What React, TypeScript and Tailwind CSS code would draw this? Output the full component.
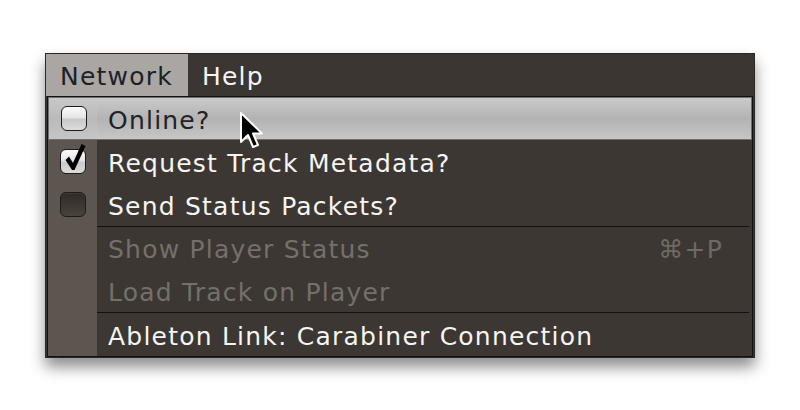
const font = { fontFamily: '"DejaVu Sans", "Liberation Sans", sans-serif' };

const Box = ({ kind }: { kind: "light" | "checked" | "dark" }) => {
  const base =
    "relative w-[26px] h-[25px] rounded-[6px] border border-[#1e1b19]";
  if (kind === "dark")
    return (
      <div
        className={`${base} bg-[linear-gradient(#2f2a26,#4a433d)] shadow-[inset_0_1px_0_rgba(255,255,255,0.08)]`}
      />
    );
  return (
    <div
      className={`${base} bg-[linear-gradient(#fbfbfb,#e6e6e6_45%,#c9c9c9_55%,#dcdcdc)]`}
    >
      {kind === "checked" && (
        <svg
          className="absolute left-[3px] top-[-7px]"
          width="22"
          height="29"
          viewBox="0 0 22 29"
        >
          <path
            d="M1.5 17 L5 13.5 L9 20 L17.5 1 L21.5 3 L10.5 27 L8 27 Z"
            fill="#000"
          />
        </svg>
      )}
    </div>
  );
};

type Row = {
  label: string;
  box?: "light" | "checked" | "dark";
  disabled?: boolean;
  active?: boolean;
  shortcut?: string;
  sepBefore?: boolean;
  short?: boolean;
};

const rows: Row[] = [
  { label: "Online?", box: "light", active: true },
  { label: "Request Track Metadata?", box: "checked" },
  { label: "Send Status Packets?", box: "dark" },
  { label: "Show Player Status", disabled: true, shortcut: "⌘+P", sepBefore: true, short: true },
  { label: "Load Track on Player", disabled: true },
  { label: "Ableton Link: Carabiner Connection", sepBefore: true },
];

const Cursor = () => (
  <svg
    className="absolute left-[239px] top-[111px]"
    width="26"
    height="40"
    viewBox="0 0 26 40"
  >
    <path
      d="M2 2 L2 31 L9 24 L14 36 L19 34 L14 22.5 L23 22.5 Z"
      fill="#000"
      stroke="#fff"
      strokeWidth="2"
      strokeLinejoin="round"
    />
  </svg>
);

export default function App() {
  return (
    <div
      className="relative w-[800px] h-[410px] bg-white pt-[53px] pl-[45px]"
      style={font}
    >
      <div className="w-[710px] bg-[#3b3632] border border-[#2a2724] shadow-[0_9px_14px_rgba(0,0,0,0.45)] text-[25px] tracking-[1.22px]">
        <div className="flex h-[42px]">
          <div className="w-[142px] bg-[#a9a6a4] text-[#1c2126] flex items-center pl-[14px] pt-[4px]">
            Network
          </div>
          <div className="text-[#f5f5f5] flex items-center pl-[14px] pt-[4px]">
            Help
          </div>
        </div>
        <div className="mx-px border border-[#141210] bg-[#3c3732] flex flex-col">
          {rows.map((r) => (
            <div key={r.label} className="flex flex-col">
              {r.sepBefore && (
                <div className="flex">
                  <div className="w-[49px] bg-[#5d5650] h-px" />
                  <div className="flex-1 mr-[3px] h-px bg-[#141110]" />
                </div>
              )}
              <div
                className={`flex ${r.short ? "h-[42px]" : "h-[43px]"} ${
                  r.active
                    ? "border border-[#6f6f6f] bg-[linear-gradient(#cacaca,#b3b3b3_50%,#c6c6c6)]"
                    : ""
                }`}
              >
                <div
                  className={`${
                    r.active ? "w-[48px] bg-[#c6c6c6]/40" : "w-[49px] bg-[#5d5650]"
                  } flex items-center justify-center pl-[1px]`}
                >
                  {r.box && <Box kind={r.box} />}
                </div>
                <div
                  className={`flex-1 flex items-center pl-[11px] pr-[29px] pt-[4px] ${
                    r.active
                      ? "text-[#1f2226]"
                      : r.disabled
                      ? "text-[#74706b]"
                      : "text-[#f5f5f5]"
                  }`}
                >
                  <span className="flex-1">{r.label}</span>
                  {r.shortcut && (
                    <span className="text-[#6e6a66]">{r.shortcut}</span>
                  )}
                </div>
              </div>
            </div>
          ))}
        </div>
      </div>
      <Cursor />
    </div>
  );
}
